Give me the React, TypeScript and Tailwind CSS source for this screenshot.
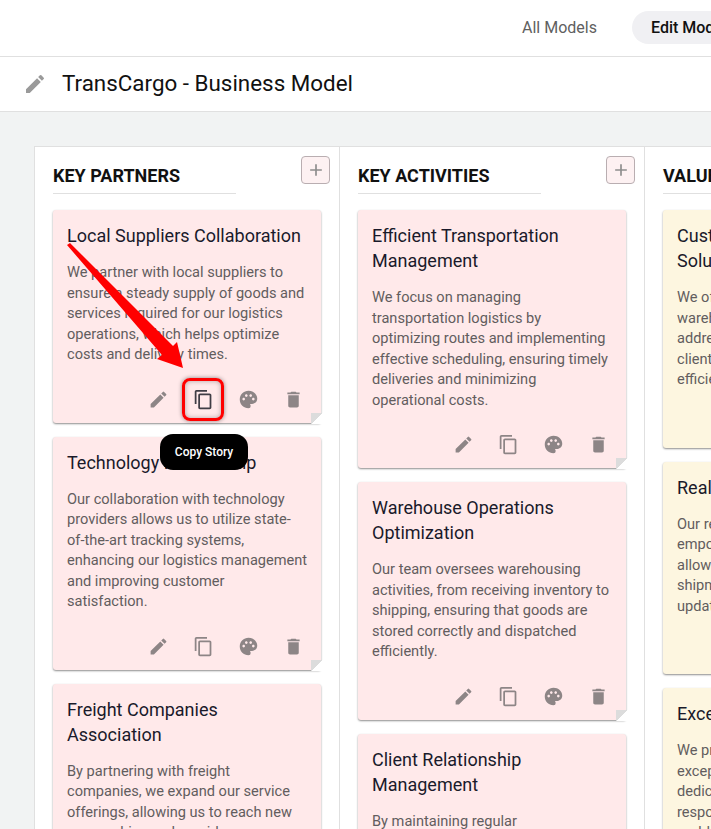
import { MdEdit, MdContentCopy, MdPalette, MdDelete, MdAdd } from 'react-icons/md'

type Story = { title: string; body: string }

const columns: { heading: string; tint: string; stories: Story[] }[] = [
  {
    heading: 'KEY PARTNERS',
    tint: 'bg-[#ffe9ea]',
    stories: [
      {
        title: 'Local Suppliers Collaboration',
        body: 'We partner with local suppliers to ensure a steady supply of goods and services required for our logistics operations, which helps optimize costs and delivery times.',
      },
      {
        title: 'Technology Partnership',
        body: 'Our collaboration with technology providers allows us to utilize state-\nof-the-art tracking systems,\nenhancing our logistics management and improving customer\nsatisfaction.',
      },
      {
        title: 'Freight Companies Association',
        body: 'By partnering with freight\ncompanies, we expand our service offerings, allowing us to reach new geographies and provide\nmore reliable delivery options to our clients.',
      },
    ],
  },
  {
    heading: 'KEY ACTIVITIES',
    tint: 'bg-[#ffe9ea]',
    stories: [
      {
        title: 'Efficient Transportation Management',
        body: 'We focus on managing transportation logistics by\noptimizing routes and implementing effective scheduling, ensuring timely deliveries and minimizing\noperational costs.',
      },
      {
        title: 'Warehouse Operations Optimization',
        body: 'Our team oversees warehousing activities, from receiving inventory to shipping, ensuring that goods are stored correctly and dispatched efficiently.',
      },
      {
        title: 'Client Relationship Management',
        body: 'By maintaining regular communication with our clients, we build lasting relationships and respond quickly to their needs.',
      },
    ],
  },
  {
    heading: 'VALUE PROPOSITIONS',
    tint: 'bg-[#fdf6e0]',
    stories: [
      {
        title: 'Customized Logistics Solutions',
        body: 'We offer tailored logistics and warehousing solutions designed to address the specific needs of our clients, ensuring operational efficiency and satisfaction.',
      },
      {
        title: 'Real-Time Tracking',
        body: 'Our real-time tracking technology empowers our customers by allowing them to monitor their shipments and receive instant updates.',
      },
      {
        title: 'Exceptional Customer Service',
        body: 'We provide our customers with exceptional support through a dedicated customer service team, responsive to every question and problem at each stage.',
      },
    ],
  },
]

function StoryCard({ story, tint, marked }: { story: Story; tint: string; marked: boolean }) {
  return (
    <div className={`relative rounded-[3px] px-[14px] pt-[13px] shadow-[0_1px_2px_rgba(0,0,0,0.45)] ${tint}`}>
      <h3 className="text-[18px] leading-[25px] text-[#1a1a2a]">{story.title}</h3>
      <p className="-mr-[2px] mt-[14px] whitespace-pre-line text-[14.6px] leading-[20.5px] text-[#625d5e]">{story.body}</p>
      <div className="-mr-[9px] flex h-[58px] items-start justify-end pt-[24px] text-[#8d8586]">
        <span className="flex w-[45px] justify-center"><MdEdit size={21} /></span>
        <span className={`flex w-[45px] justify-center ${marked ? 'text-[#3f3d45]' : ''}`}><MdContentCopy size={21} /></span>
        <span className="flex w-[45px] justify-center"><MdPalette size={21} /></span>
        <span className="flex w-[45px] justify-center"><MdDelete size={21} /></span>
      </div>
      {/* folded corner */}
      <span className="absolute -bottom-[1px] -right-[2px] h-[11px] w-[12px] bg-[linear-gradient(to_bottom_right,#dcdcdc_50%,#ffffff_50%)]" />
      {marked && (
        <>
          <span className="absolute left-[129px] top-[168px] h-[43px] w-[42px] rounded-lg border-[3px] border-[#ff0000] shadow-[0_0_4px_rgba(0,0,0,0.45),inset_0_0_5px_rgba(0,0,0,0.3)]" />
          <span className="absolute left-[107px] top-[224px] z-10 flex h-[36px] w-[88px] items-center justify-center rounded-[13px] bg-black text-[12px] font-medium text-white">
            Copy Story
          </span>
        </>
      )}
    </div>
  )
}

export default function App() {
  return (
    <div className="relative h-[829px] w-[711px] overflow-hidden bg-[#f1f3f3] font-['Roboto',sans-serif]">
      {/* top nav */}
      <div className="flex h-[57px] items-start whitespace-nowrap border-b border-[#e0e0e0] bg-white pl-[522px] pt-[11px] text-[16px]">
        <span className="flex h-[33px] w-[74px] items-center text-[#5f5f5f]">All Models</span>
        <span className="ml-[36px] flex h-[33px] items-center rounded-full bg-[#f0f0f3] px-[19px] font-medium text-[#111111]">
          Edit Model
        </span>
      </div>

      {/* title */}
      <div className="flex h-[55px] items-center border-b border-[#e0e0e0] bg-white pl-[23px]">
        <MdEdit size={24} className="text-[#9a9a9a]" />
        <h1 className="ml-[15px] text-[22.4px] text-[#111111]">TransCargo - Business Model</h1>
      </div>

      {/* canvas */}
      <div className="ml-[34px] mt-[34px] flex w-[1220px] border border-[#e0e0e0] bg-white">
        {columns.map(col => (
          <div key={col.heading} className="w-[305px] shrink-0 border-r border-[#e0e0e0] pl-[18px] pr-[18px]">
            <div className="mb-[16px] flex items-start justify-between">
              <h2 className="mt-[19px] w-[183px] whitespace-nowrap border-b border-[#e0e0e0] pb-[7px] text-[18px] font-bold leading-[20px] text-[#111111]">
                {col.heading}
              </h2>
              <button className="-mr-[9px] mt-[9px] flex h-[28px] w-[29px] items-center justify-center rounded border border-[#b9aeb1] bg-[#fdf1f2] text-[#8d8d8d]">
                <MdAdd size={20} />
              </button>
            </div>
            <div className="flex flex-col gap-[14px]">
              {col.stories.map((s, i) => (
                <StoryCard key={s.title} story={s} tint={col.tint} marked={col.heading === 'KEY PARTNERS' && i === 0} />
              ))}
            </div>
          </div>
        ))}
      </div>

      {/* annotation arrow */}
      <svg className="absolute left-0 top-0 z-20" width="711" height="829">
        <polygon points="67,245 70,243 173,346 177,342 183,368 157,359 162,355" fill="#ff0000" />
      </svg>
    </div>
  )
}
